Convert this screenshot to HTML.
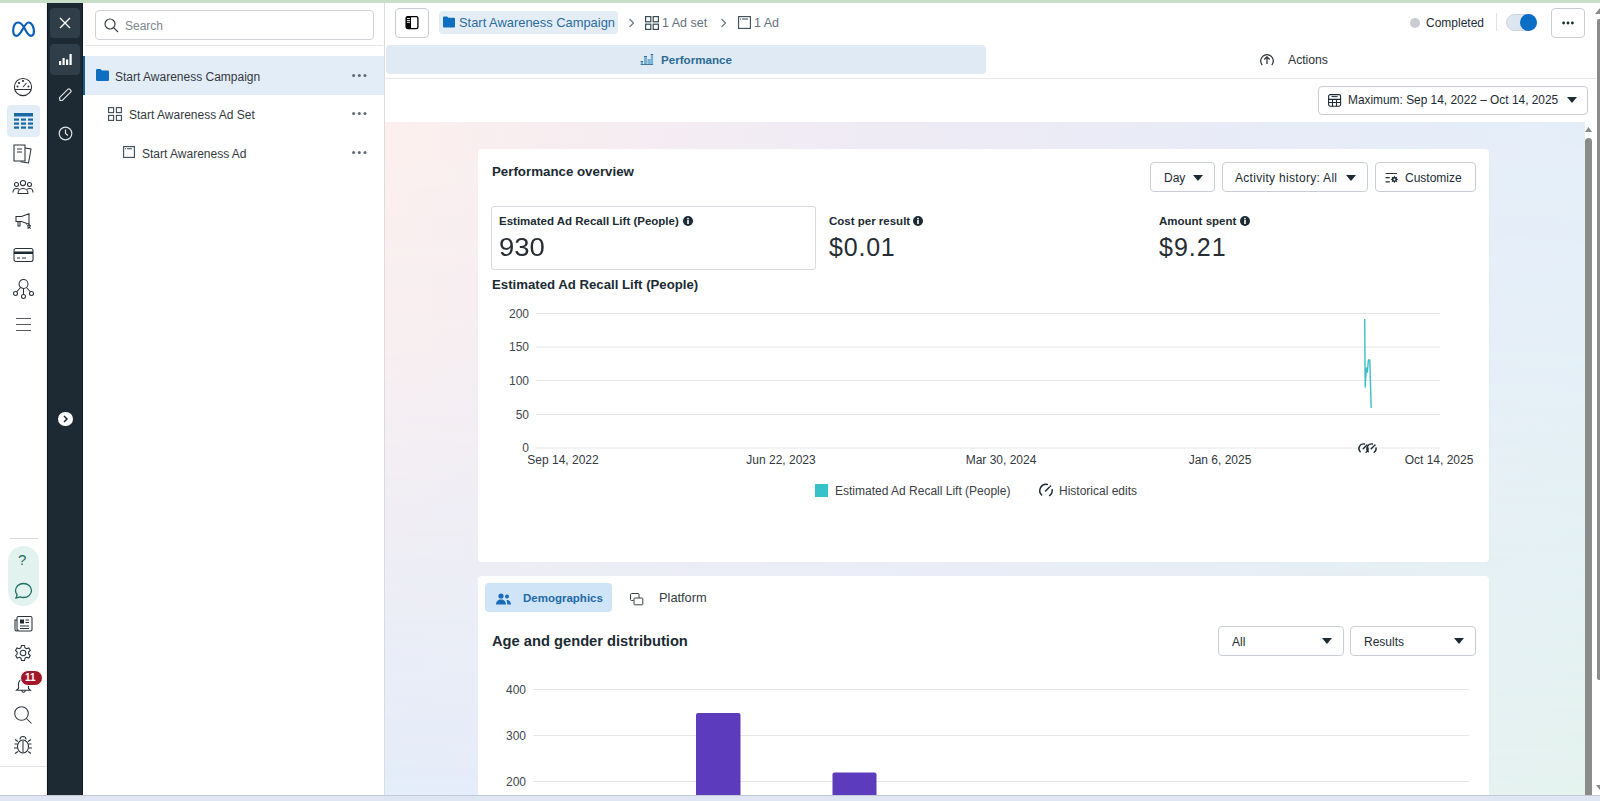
<!DOCTYPE html>
<html><head><meta charset="utf-8">
<style>
*{box-sizing:border-box;margin:0;padding:0}
html,body{width:1600px;height:801px;overflow:hidden;background:#fff;font-family:"Liberation Sans",sans-serif;color:#1c2b33}
.a{position:absolute}
.t{position:absolute;white-space:nowrap;line-height:1}
svg{display:block;position:absolute}
#topline{left:0;top:0;width:1600px;height:3px;background:#c6dfc6}
#dark{left:47px;top:3px;width:36px;height:792px;background:#1d2a33;border-left:1px solid #0f171c;border-right:1px solid #141d23}
#tree{left:83px;top:3px;width:302px;height:792px;background:#fff;border-right:1px solid #d9dde2}
#bottom{left:0;top:795px;width:1600px;height:6px;background:#dfe6f3;border-top:1px solid #c4cad3}
.ico{stroke:#2a3137;fill:none;stroke-width:1.05}
</style></head>
<body>
<div id="topline" class="a"></div>

<!-- LEFT RAIL -->
<svg style="left:0;top:0" width="47" height="50" viewBox="0 0 47 50">
 <path transform="translate(23.5 29.2) scale(.92) translate(-23.5 -29.2)" d="M24 27C21.5 23 19.5 21.9 17.5 21.9C14 21.9 12.3 26.5 12.3 30.5C12.3 34 13.8 36.4 16 36.4C19 36.4 21 32 23 28.5C25.5 24 27 21.9 29 21.9C32.5 21.9 34.8 27 34.8 31.5C34.8 34.5 33.5 36.4 31.5 36.4C28.5 36.4 26.5 32 24 27Z" fill="none" stroke="#0a60b8" stroke-width="2.4" stroke-linejoin="round"/>
</svg>
<!-- gauge -->
<svg style="left:13px;top:77px" width="20" height="20" viewBox="0 0 20 20" class="ico">
 <circle cx="10" cy="10" r="8.6"/><path d="M2 12.5h16M10 10l3.5-4"/>
 <circle cx="6" cy="6" r=".5" fill="#1c2b33"/><circle cx="10" cy="4" r=".5" fill="#1c2b33"/><circle cx="4.5" cy="9.5" r=".5" fill="#1c2b33"/><circle cx="15.5" cy="9.5" r=".5" fill="#1c2b33"/>
</svg>
<div class="a" style="left:7px;top:105px;width:33px;height:32px;background:#e3edf7;border-radius:4px"></div>
<svg style="left:14px;top:113px" width="19" height="17" viewBox="0 0 19 17">
 <rect x="0" y="0" width="19" height="3.5" fill="#1a68a3"/>
 <g fill="#1a68a3"><rect x="0" y="5.5" width="5" height="2.2"/><rect x="7" y="5.5" width="5" height="2.2"/><rect x="14" y="5.5" width="5" height="2.2"/>
 <rect x="0" y="9.5" width="5" height="2.2"/><rect x="7" y="9.5" width="5" height="2.2"/><rect x="14" y="9.5" width="5" height="2.2"/>
 <rect x="0" y="13.5" width="5" height="2.2"/><rect x="7" y="13.5" width="5" height="2.2"/><rect x="14" y="13.5" width="5" height="2.2"/></g>
</svg>
<!-- pages -->
<svg style="left:12px;top:143px" width="22" height="22" viewBox="0 0 22 22" class="ico">
 <path d="M2 2h11v16H2z"/><path d="M13 5l6 1-2.5 14-8-1.3"/><path d="M5 6h5M5 9h5"/>
</svg>
<!-- people -->
<svg style="left:12px;top:179px" width="22" height="16" viewBox="0 0 22 16" class="ico">
 <circle cx="11" cy="4" r="2.6"/><circle cx="4.5" cy="5.5" r="2"/><circle cx="17.5" cy="5.5" r="2"/>
 <path d="M6 14.5c0-3 2.2-5 5-5s5 2 5 5zM1 13.5c0-2.3 1.5-4 3.5-4 1 0 1.8.3 2.4.9M21 13.5c0-2.3-1.5-4-3.5-4-1 0-1.8.3-2.4.9"/>
</svg>
<!-- megaphone -->
<svg style="left:15px;top:213px" width="17" height="17" viewBox="0 0 17 17" class="ico">
 <path d="M1 3.5h5.5L14 .8v10.4L6.5 8.5H1z"/><path d="M3 8.5v4.5h2V8.5"/><path d="M11.5 11.5l1.2 1.2M14 10.8v1.5M15.8 12.7h-1.5M12.3 15.5l1.2-1.2M14.5 14.5l1.2 1.2M13.8 15.8v-1.5" stroke-width="1"/><circle cx="14" cy="13.5" r="1.1"/>
</svg>
<!-- card -->
<svg style="left:13px;top:247px" width="21" height="16" viewBox="0 0 21 16" class="ico">
 <rect x="1" y="1.5" width="19" height="13" rx="2"/><rect x="1" y="4.5" width="19" height="2.5" fill="#1c2b33" stroke="none"/><path d="M4 11h3M9 11h4" stroke-width="1"/>
</svg>
<!-- network -->
<svg style="left:12px;top:278px" width="23" height="22" viewBox="0 0 23 22" class="ico">
 <circle cx="11.5" cy="6" r="4.5"/><circle cx="3.5" cy="15.5" r="2"/><circle cx="11.5" cy="18.5" r="2"/><circle cx="19.5" cy="15.5" r="2"/>
 <path d="M11.5 10.5v6M8.5 9.5l-4 4.5M14.5 9.5l4 4.5"/>
</svg>
<!-- menu -->
<svg style="left:15px;top:317px" width="17" height="15" viewBox="0 0 17 15" class="ico">
 <path d="M1 1.5h15M1 7.5h15M1 13.5h15" stroke="#555b60"/>
</svg>

<div class="a" style="left:10px;top:538px;width:28px;height:1px;background:#d6d9dd"></div>
<div class="a" style="left:8px;top:546px;width:31px;height:60px;background:#e2f2ef;border-radius:16px"></div>
<div class="t" style="left:18px;top:552px;font-size:15px;color:#1d6f62">?</div>
<svg style="left:14px;top:582px" width="19" height="18" viewBox="0 0 19 18" fill="none" stroke="#1d6f62" stroke-width="1.3">
 <path d="M9.5 1.5c4.4 0 8 3.1 8 7s-3.6 7-8 7c-1.2 0-2.3-.2-3.3-.6L2 16l1.1-3.4C2 11.4 1.5 10 1.5 8.5c0-3.9 3.6-7 8-7z"/>
</svg>
<!-- news -->
<svg style="left:14px;top:615px" width="19" height="18" viewBox="0 0 19 18" class="ico">
 <rect x="3" y="1.5" width="15" height="14.5" rx="1.5"/><path d="M3 5H1v9.5a1.5 1.5 0 0 0 3 0"/><rect x="6" y="4.5" width="4" height="4" fill="#1c2b33" stroke="none"/><path d="M6 11h9M6 13.5h9M11.5 5h3.5M11.5 7.5h3.5" stroke-width="1"/>
</svg>
<!-- gear -->
<svg style="left:13px;top:644px" width="20" height="20" viewBox="0 0 20 20" class="ico">
 <path d="M8.5 1.5h3l.5 2.3 1.6.9 2.2-.8 1.5 2.6-1.7 1.6v1.8l1.7 1.6-1.5 2.6-2.2-.8-1.6.9-.5 2.3h-3l-.5-2.3-1.6-.9-2.2.8-1.5-2.6L4.2 10V8.1L2.5 6.5 4 3.9l2.2.8 1.6-.9z"/><circle cx="10" cy="9" r="2.8"/>
</svg>
<!-- bell -->
<svg style="left:15px;top:674px" width="17" height="20" viewBox="0 0 17 20" class="ico">
 <path d="M3.5 14.5V10a5 5 0 0 1 10 0v4.5l2 1.8H1.5zM6.8 16.5a1.7 1.7 0 0 0 3.4 0"/>
</svg>
<div class="a" style="left:19.5px;top:670px;width:23px;height:16px;background:#a3172a;border-radius:8px;border:1.5px solid #fff"></div>
<div class="t" style="left:25px;top:673px;font-size:10px;font-weight:bold;color:#fff">11</div>
<!-- search -->
<svg style="left:13px;top:705px" width="20" height="20" viewBox="0 0 20 20" class="ico">
 <circle cx="8.5" cy="8.5" r="6.8"/><path d="M13.5 13.5l5 5"/>
</svg>
<!-- bug -->
<svg style="left:13px;top:735px" width="20" height="20" viewBox="0 0 20 20" class="ico">
 <ellipse cx="10" cy="11.5" rx="5.5" ry="6.5"/><path d="M7 4.5a3 3 0 0 1 6 0M10 6v11.5M4.5 9H1.5M15.5 9h3M4.5 13H1M15.5 13H19M5 16.5l-3 2M15 16.5l3 2M5 6.5L2 4.5M15 6.5l3-2"/>
</svg>
<div class="a" style="left:0;top:766px;width:47px;height:1px;background:#e4e6ea"></div>
<div class="a" style="left:46px;top:3px;width:1px;height:792px;background:#eceef0"></div>

<!-- DARK SIDEBAR -->
<div id="dark" class="a"></div>
<div class="a" style="left:50px;top:8px;width:30px;height:30px;background:#2f3e49;border-radius:4px"></div>
<svg style="left:59px;top:17px" width="12" height="12" viewBox="0 0 12 12" stroke="#fff" stroke-width="1.4"><path d="M1 1l10 10M11 1L1 11"/></svg>
<div class="a" style="left:50px;top:44px;width:30px;height:31px;background:#2f3e49;border-radius:4px"></div>
<svg style="left:59px;top:53px" width="13" height="12" viewBox="0 0 13 12" fill="#fff">
 <rect x="0" y="8" width="2.2" height="4"/><rect x="3.5" y="5" width="2.2" height="7"/><rect x="7" y="6.5" width="2.2" height="5.5"/><rect x="10.5" y="1" width="2.2" height="11"/>
</svg>
<svg style="left:58px;top:88px" width="14" height="14" viewBox="0 0 14 14" fill="none" stroke="#dfe2e5" stroke-width="1.2">
 <path d="M2 12.5l-.5-2.8 8.3-8.3a1.5 1.5 0 0 1 2.1 0l.7.7a1.5 1.5 0 0 1 0 2.1L4.3 12.5z"/>
</svg>
<svg style="left:57.5px;top:125.5px" width="15" height="15" viewBox="0 0 15 15" fill="none" stroke="#dfe2e5" stroke-width="1.2">
 <circle cx="7.5" cy="7.5" r="6.3"/><path d="M7.5 3.5v4l2.5 2"/>
</svg>
<div class="a" style="left:58px;top:411.5px;width:14.5px;height:14.5px;background:#fff;border-radius:50%"></div>
<svg style="left:62px;top:415px" width="7" height="8" viewBox="0 0 7 8" fill="none" stroke="#1c2a33" stroke-width="1.5"><path d="M2 1l3 3-3 3"/></svg>

<!-- TREE -->
<div id="tree" class="a"></div>
<!-- tree content -->
<div class="a" style="left:95px;top:10px;width:279px;height:30px;border:1px solid #cfd3d8;border-radius:4px;background:#fff"></div>
<svg style="left:104px;top:18px" width="15" height="15" viewBox="0 0 15 15" fill="none" stroke="#3a4046" stroke-width="1.2"><circle cx="6" cy="6" r="5"/><path d="M9.7 9.7l4.3 4.3"/></svg>
<div class="t" style="left:125px;top:20px;font-size:12px;color:#80878d">Search</div>
<div class="a" style="left:85px;top:45px;width:298px;height:1px;background:#e3e6ea"></div>
<div class="a" style="left:83px;top:56px;width:301px;height:39px;background:#e3edf7"></div>
<div class="a" style="left:83px;top:56px;width:2px;height:39px;background:#1a5a8c"></div>
<svg style="left:96px;top:69px" width="13" height="12" viewBox="0 0 13 12"><path d="M0 1.2A1.2 1.2 0 0 1 1.2 0h3.3l1.4 1.5h5.9A1.2 1.2 0 0 1 13 2.7v8.1a1.2 1.2 0 0 1-1.2 1.2H1.2A1.2 1.2 0 0 1 0 10.8z" fill="#0e6fc1"/></svg>
<div class="t" style="left:115px;top:71px;font-size:12px;color:#33393f">Start Awareness Campaign</div>
<svg style="left:352px;top:74px" width="15" height="3" viewBox="0 0 15 3" fill="#5f6a73"><circle cx="1.6" cy="1.5" r="1.5"/><circle cx="7.3" cy="1.5" r="1.5"/><circle cx="13" cy="1.5" r="1.5"/></svg>
<svg style="left:108px;top:107px" width="14" height="14" viewBox="0 0 14 14" fill="none" stroke="#3a4a55" stroke-width="1.1"><rect x=".6" y=".6" width="5" height="5"/><rect x="8.4" y=".6" width="5" height="5"/><rect x=".6" y="8.4" width="5" height="5"/><rect x="8.4" y="8.4" width="5" height="5"/></svg>
<div class="t" style="left:129px;top:109px;font-size:12px;color:#33393f">Start Awareness Ad Set</div>
<svg style="left:352px;top:112px" width="15" height="3" viewBox="0 0 15 3" fill="#5f6a73"><circle cx="1.6" cy="1.5" r="1.5"/><circle cx="7.3" cy="1.5" r="1.5"/><circle cx="13" cy="1.5" r="1.5"/></svg>
<svg style="left:123px;top:146px" width="12" height="12" viewBox="0 0 12 12" fill="none" stroke="#3a4a55" stroke-width="1.1"><rect x=".6" y=".6" width="10.8" height="10.8"/><path d="M2 2.8h1M4 2.8h5"/></svg>
<div class="t" style="left:142px;top:148px;font-size:12px;color:#33393f">Start Awareness Ad</div>
<svg style="left:352px;top:151px" width="15" height="3" viewBox="0 0 15 3" fill="#5f6a73"><circle cx="1.6" cy="1.5" r="1.5"/><circle cx="7.3" cy="1.5" r="1.5"/><circle cx="13" cy="1.5" r="1.5"/></svg>

<!-- MAIN -->
<!-- top bar -->
<div class="a" style="left:395px;top:8px;width:34px;height:30px;border:1px solid #c9ced4;border-radius:4px;background:#fff"></div>
<svg style="left:405px;top:15px" width="14" height="15" viewBox="0 0 14 15"><rect x="1.1" y="1.6" width="11.8" height="12" rx="1.6" fill="#fff" stroke="#000" stroke-width="1.3"/><path d="M1 3.2A1.6 1.6 0 0 1 2.6 1.6H6v12H2.6A1.6 1.6 0 0 1 1 12z" fill="#000"/><path d="M2.3 3.5h2.4M2.3 5.5h2.4M2.3 7.3h2.4" stroke="#fff" stroke-width=".9" stroke-linecap="round"/></svg>
<div class="a" style="left:439px;top:11px;width:179px;height:23px;background:#e4edf6;border-radius:4px"></div>
<svg style="left:443px;top:16px" width="12" height="12" viewBox="0 0 13 12"><path d="M0 1.2A1.2 1.2 0 0 1 1.2 0h3.3l1.4 1.5h5.9A1.2 1.2 0 0 1 13 2.7v8.1a1.2 1.2 0 0 1-1.2 1.2H1.2A1.2 1.2 0 0 1 0 10.8z" fill="#0e6fc1"/></svg>
<div class="t" style="left:459px;top:17px;font-size:12.9px;color:#2b6c9e">Start Awareness Campaign</div>
<svg style="left:628px;top:18px" width="7" height="10" viewBox="0 0 7 10" fill="none" stroke="#67788a" stroke-width="1.2"><path d="M1.5 1l4 4-4 4"/></svg>
<svg style="left:645px;top:16px" width="14" height="14" viewBox="0 0 14 14" fill="none" stroke="#3a4a55" stroke-width="1.2"><rect x=".6" y=".6" width="5.2" height="5.2"/><rect x="8.2" y=".6" width="5.2" height="5.2"/><rect x=".6" y="8.2" width="5.2" height="5.2"/><rect x="8.2" y="8.2" width="5.2" height="5.2"/></svg>
<div class="t" style="left:662px;top:17px;font-size:12.5px;color:#67727c">1 Ad set</div>
<svg style="left:720px;top:18px" width="7" height="10" viewBox="0 0 7 10" fill="none" stroke="#67788a" stroke-width="1.2"><path d="M1.5 1l4 4-4 4"/></svg>
<svg style="left:738px;top:16px" width="13" height="13" viewBox="0 0 13 13" fill="none" stroke="#3a4a55" stroke-width="1.1"><rect x=".6" y=".6" width="11.8" height="11.8"/><path d="M2 3h1M4 3h6"/></svg>
<div class="t" style="left:754px;top:17px;font-size:12.5px;color:#67727c">1 Ad</div>

<div class="a" style="left:1410px;top:18px;width:10px;height:10px;border-radius:50%;background:#c9cdd2"></div>
<div class="t" style="left:1426px;top:17px;font-size:12px;color:#1c2b33">Completed</div>
<div class="a" style="left:1496px;top:13px;width:1px;height:18px;background:#dfe2e6"></div>
<div class="a" style="left:1506px;top:14px;width:31px;height:17px;border-radius:9px;background:#dde6ef;border:1px solid #ccd5de"></div>
<div class="a" style="left:1520px;top:14px;width:17px;height:17px;border-radius:50%;background:#0b6ec5"></div>
<div class="a" style="left:1551px;top:8px;width:34px;height:30px;border:1px solid #c9ced4;border-radius:4px;background:#fff"></div>
<svg style="left:1562px;top:21px" width="12" height="4" viewBox="0 0 12 4" fill="#1c2b33"><circle cx="1.6" cy="2" r="1.4"/><circle cx="6" cy="2" r="1.4"/><circle cx="10.4" cy="2" r="1.4"/></svg>

<!-- tabs -->
<div class="a" style="left:386px;top:45px;width:600px;height:29px;background:#dfeaf5;border-radius:4px"></div>
<svg style="left:640px;top:53px" width="14" height="12" viewBox="0 0 14 12"><g fill="#79b0d6"><rect x=".7" y="8" width="2.4" height="3.8"/><rect x="4" y="3" width="3" height="8.8"/><rect x="7.5" y="6" width="3.2" height="5.8"/><rect x="10.8" y="1" width="2.3" height="10.8"/></g><g fill="#3f6f8f"><rect x=".7" y="8" width="2.4" height="1"/><rect x="4" y="3" width="3" height="1"/><rect x="10.8" y="1" width="2.3" height="1"/><rect x=".7" y="11" width="12.4" height=".9"/></g></svg>
<div class="t" style="left:661px;top:54px;font-size:11.6px;font-weight:bold;color:#2c6a94">Performance</div>
<svg style="left:1259px;top:52px" width="16" height="15" viewBox="0 0 16 15" fill="none" stroke="#2a3137" stroke-width="1.25"><path d="M3.2 13A6.3 6.3 0 1 1 12.8 13"/><path d="M8 12V5M5.3 7.5L8 4.8l2.7 2.7"/></svg>
<div class="t" style="left:1288px;top:54px;font-size:12.2px;color:#2a3137">Actions</div>
<div class="a" style="left:385px;top:78px;width:1211px;height:1px;background:#e6e8eb"></div>

<!-- date row -->
<div class="a" style="left:1318px;top:86px;width:270px;height:29px;border:1px solid #c9ced4;border-radius:4px;background:#fff"></div>
<svg style="left:1328px;top:94px" width="14" height="13" viewBox="0 0 14 13" fill="none" stroke="#1c2b33" stroke-width="1.1"><rect x=".6" y=".6" width="12" height="11.6" rx="1.6"/><path d="M.6 5.4h12M.6 8.5h12M4.5 5.4v6.8M8.5 5.4v6.8"/><path d="M3.5 2.6h6" stroke-width="1"/></svg>
<div class="t" style="left:1348px;top:95px;font-size:11.9px;color:#1c2b33">Maximum: Sep 14, 2022 – Oct 14, 2025</div>
<svg style="left:1567px;top:97px" width="10" height="6" viewBox="0 0 10 6"><path d="M0 0h10L5 6z" fill="#1c2b33"/></svg>
<!-- gradient area -->
<div class="a" style="left:385px;top:122px;width:1200px;height:673px;background:linear-gradient(90deg,#e4edfa 0%,#e8eef8 50%,#e5f3ef 100%)"></div>
<div class="a" style="left:385px;top:122px;width:1200px;height:673px;background:linear-gradient(90deg,#fcefee 0%,#f0ebf4 35%,#e9ebf7 65%,#e4eef9 100%);-webkit-mask-image:linear-gradient(180deg,#000 0%,rgba(0,0,0,.85) 30%,rgba(0,0,0,0) 100%)"></div>

<!-- CARD 1 -->
<div class="a" style="left:478px;top:149px;width:1011px;height:413px;background:#fff;border-radius:4px"></div>
<div class="t" style="left:492px;top:165px;font-size:13.3px;font-weight:bold;color:#1c2b33">Performance overview</div>

<div class="a" style="left:1150px;top:162px;width:65px;height:30px;border:1px solid #c9ced4;border-radius:4px"></div>
<div class="t" style="left:1164px;top:172px;font-size:12px;color:#1c2b33">Day</div>
<svg style="left:1193px;top:175px" width="10" height="6" viewBox="0 0 10 6"><path d="M0 0h10L5 6z" fill="#1c2b33"/></svg>
<div class="a" style="left:1222px;top:162px;width:146px;height:30px;border:1px solid #c9ced4;border-radius:4px"></div>
<div class="t" style="left:1235px;top:172px;font-size:12px;color:#1c2b33;letter-spacing:.3px">Activity history: All</div>
<svg style="left:1346px;top:175px" width="10" height="6" viewBox="0 0 10 6"><path d="M0 0h10L5 6z" fill="#1c2b33"/></svg>
<div class="a" style="left:1375px;top:162px;width:101px;height:30px;border:1px solid #c9ced4;border-radius:4px"></div>
<svg style="left:1385px;top:171px" width="14" height="14" viewBox="0 0 14 14"><path d="M.7 2.5H12M.5 6.6h4.3M.5 10.9h4.3" stroke="#2a3137" stroke-width="1.1"/><polygon points="9.40,4.50 10.32,6.18 12.16,5.64 11.62,7.48 13.30,8.40 11.62,9.32 12.16,11.16 10.32,10.62 9.40,12.30 8.48,10.62 6.64,11.16 7.18,9.32 5.50,8.40 7.18,7.48 6.64,5.64 8.48,6.18" fill="#1c2b33"/><circle cx="9.4" cy="8.4" r="1" fill="#fff"/></svg>
<div class="t" style="left:1405px;top:172px;font-size:12px;color:#1c2b33">Customize</div>

<div class="a" style="left:491px;top:206px;width:325px;height:64px;border:1px solid #d6d9dd;border-radius:3px"></div>
<div class="t" style="left:499px;top:216px;font-size:11.5px;font-weight:bold;color:#1c2b33">Estimated Ad Recall Lift (People)</div>
<svg style="left:683px;top:216px" width="10" height="10" viewBox="0 0 10 10"><circle cx="5" cy="5" r="5" fill="#1c2b33"/><rect x="4.2" y="4" width="1.6" height="4" fill="#fff"/><circle cx="5" cy="2.6" r=".9" fill="#fff"/></svg>
<div class="t" style="left:499px;top:235px;font-size:25px;color:#262d33;transform:scaleX(1.1);transform-origin:0 0">930</div>

<div class="t" style="left:829px;top:216px;font-size:11.5px;font-weight:bold;color:#1c2b33">Cost per result</div>
<svg style="left:913px;top:216px" width="10" height="10" viewBox="0 0 10 10"><circle cx="5" cy="5" r="5" fill="#1c2b33"/><rect x="4.2" y="4" width="1.6" height="4" fill="#fff"/><circle cx="5" cy="2.6" r=".9" fill="#fff"/></svg>
<div class="t" style="left:829px;top:235px;font-size:25px;color:#262d33;letter-spacing:.8px">$0.01</div>

<div class="t" style="left:1159px;top:216px;font-size:11.5px;font-weight:bold;color:#1c2b33">Amount spent</div>
<svg style="left:1240px;top:216px" width="10" height="10" viewBox="0 0 10 10"><circle cx="5" cy="5" r="5" fill="#1c2b33"/><rect x="4.2" y="4" width="1.6" height="4" fill="#fff"/><circle cx="5" cy="2.6" r=".9" fill="#fff"/></svg>
<div class="t" style="left:1159px;top:235px;font-size:25px;color:#262d33;letter-spacing:1px">$9.21</div>

<div class="t" style="left:492px;top:278px;font-size:13.2px;font-weight:bold;color:#1c2b33">Estimated Ad Recall Lift (People)</div>

<!-- chart 1 -->
<svg style="left:478px;top:290px" width="1011" height="230" viewBox="478 290 1011 230">
 <g stroke="#e4e6e9" stroke-width="1">
  <path d="M536 313.5H1440M536 347H1440M536 380.5H1440M536 414.5H1440M536 448H1440"/>
 </g>
 <g font-family="Liberation Sans" font-size="12" fill="#3f474e" text-anchor="end">
  <text x="529" y="317.5">200</text><text x="529" y="351">150</text><text x="529" y="385">100</text><text x="529" y="418.5">50</text><text x="529" y="452">0</text>
 </g>
 <g font-family="Liberation Sans" font-size="12" fill="#33393f" text-anchor="middle">
  <text x="563" y="464">Sep 14, 2022</text><text x="781" y="464">Jun 22, 2023</text><text x="1001" y="464">Mar 30, 2024</text><text x="1220" y="464">Jan 6, 2025</text><text x="1439" y="464">Oct 14, 2025</text>
 </g>
 <path d="M1364.7 319L1365.2 387L1365.8 376L1366.6 368L1367.4 372L1368.4 360L1369.8 360L1371.2 408" fill="none" stroke="#3cbfc4" stroke-width="1.4" stroke-linejoin="round"/>
<path d="M1360.25 451.75A4.6 4.6 0 0 1 1364.46 444.00M1368.06 447.86A4.6 4.6 0 0 1 1366.14 452.27M1363.17 448.83L1365.94 446.06" fill="none" stroke="#1c2b33" stroke-width="1.4" stroke-linecap="round"/><circle cx="1366.82" cy="445.18" r="0.84" fill="#1c2b33"/><path d="M1368.25 451.75A4.6 4.6 0 0 1 1372.46 444.00M1376.06 447.86A4.6 4.6 0 0 1 1374.14 452.27M1371.17 448.83L1373.94 446.06" fill="none" stroke="#1c2b33" stroke-width="1.4" stroke-linecap="round"/><circle cx="1374.82" cy="445.18" r="0.84" fill="#1c2b33"/>
 <rect x="815" y="484" width="13" height="13" fill="#37c1c8"/>
 <text x="835" y="495" font-family="Liberation Sans" font-size="12" fill="#3b4046">Estimated Ad Recall Lift (People)</text>
 <path d="M1041.62 494.88A6.2 6.2 0 0 1 1047.29 484.44M1052.14 489.64A6.2 6.2 0 0 1 1049.56 495.58M1045.56 490.94L1049.29 487.21" fill="none" stroke="#1c2b33" stroke-width="1.5" stroke-linecap="round"/><circle cx="1050.47" cy="486.03" r="0.90" fill="#1c2b33"/>
 <text x="1059" y="495" font-family="Liberation Sans" font-size="12" fill="#3b4046">Historical edits</text>
</svg>

<!-- CARD 2 -->
<div class="a" style="left:478px;top:576px;width:1011px;height:230px;background:#fff;border-radius:4px"></div>
<div class="a" style="left:485px;top:583px;width:127px;height:29px;background:#cfe4f7;border-radius:4px"></div>
<svg style="left:496px;top:593px" width="15" height="12" viewBox="0 0 15 12" fill="#1a6bb8"><circle cx="5" cy="3" r="2.6"/><path d="M0 11.5c0-3 2.2-5 5-5s5 2 5 5z"/><circle cx="11" cy="3.5" r="2"/><path d="M10.5 7c2.5 0 4.5 1.5 4.5 4.5h-3.7c0-1.8-.3-3.3-.8-4.5z"/></svg>
<div class="t" style="left:523px;top:593px;font-size:11.5px;font-weight:bold;color:#1f6aa8">Demographics</div>
<svg style="left:630px;top:593px" width="14" height="13" viewBox="0 0 14 13" fill="none" stroke="#3b4248" stroke-width="1"><path d="M3.5 7.5H1.5a1 1 0 0 1-1-1v-5a1 1 0 0 1 1-1h6.5a1 1 0 0 1 1 1V5"/><rect x="4" y="5" width="8.8" height="6.8" rx=".6"/></svg>
<div class="t" style="left:659px;top:592px;font-size:12.8px;color:#333d44">Platform</div>

<div class="t" style="left:492px;top:634px;font-size:14.7px;font-weight:bold;color:#1c2b33">Age and gender distribution</div>
<div class="a" style="left:1218px;top:626px;width:126px;height:30px;border:1px solid #c9ced4;border-radius:4px"></div>
<div class="t" style="left:1232px;top:636px;font-size:12px;color:#1c2b33">All</div>
<svg style="left:1322px;top:638px" width="10" height="6" viewBox="0 0 10 6"><path d="M0 0h10L5 6z" fill="#1c2b33"/></svg>
<div class="a" style="left:1350px;top:626px;width:126px;height:30px;border:1px solid #c9ced4;border-radius:4px"></div>
<div class="t" style="left:1364px;top:636px;font-size:12px;color:#1c2b33">Results</div>
<svg style="left:1454px;top:638px" width="10" height="6" viewBox="0 0 10 6"><path d="M0 0h10L5 6z" fill="#1c2b33"/></svg>

<svg style="left:478px;top:670px" width="1011" height="125" viewBox="478 670 1011 125">
 <g stroke="#e4e6e9" stroke-width="1"><path d="M533 689.5H1469M533 735.5H1469M533 781.5H1469"/></g>
 <g font-family="Liberation Sans" font-size="12" fill="#3f474e" text-anchor="end">
  <text x="526" y="694">400</text><text x="526" y="740">300</text><text x="526" y="786">200</text>
 </g>
 <rect x="696" y="713" width="44.5" height="90" rx="2" fill="#5d3bbd"/>
 <rect x="832.5" y="772.5" width="44" height="40" rx="2" fill="#5d3bbd"/>
</svg>

<!-- scrollbars -->
<div class="a" style="left:1585px;top:122px;width:15px;height:673px;background:#fff"></div>
<svg style="left:1585px;top:127px" width="7" height="5" viewBox="0 0 7 5"><path d="M0 5L3.5 0 7 5z" fill="#8a8a8a"/></svg>
<div class="a" style="left:1585px;top:138px;width:7px;height:657px;background:#8b8b8b;border-radius:3.5px 3.5px 0 0"></div>
<svg style="left:1595px;top:8px" width="5" height="6" viewBox="0 0 5 6"><path d="M0 6L5 0V6z" fill="#8a8a8a"/></svg>
<div class="a" style="left:1597px;top:19px;width:3px;height:661px;background:#8b8b8b;border-radius:2px 0 0 2px"></div>
<svg style="left:1596px;top:785px" width="4" height="5" viewBox="0 0 4 5"><path d="M0 0h4v5z" fill="#8a8a8a"/></svg>

<div id="bottom" class="a"></div>
</body></html>
